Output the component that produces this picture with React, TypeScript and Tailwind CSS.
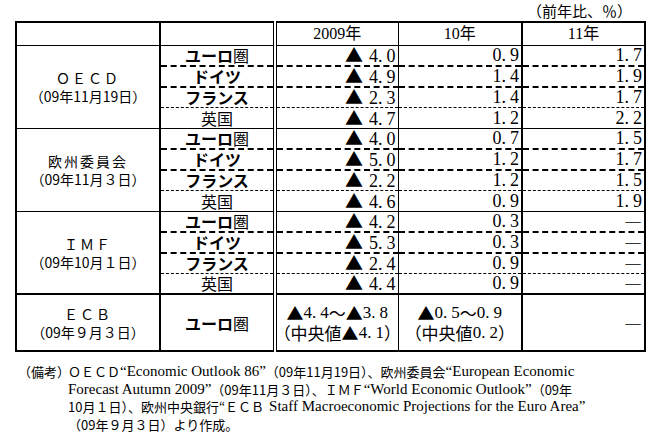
import React from 'react'

type Row = { name: string; v: string[] }
type Group = { label: string; date: string; rows: Row[] }

const groups: Group[] = [
  {
    label: 'ＯＥＣＤ',
    date: '（09年11月19日）',
    rows: [
      { name: 'ユーロ圏', v: ['▲4.0', '0.9', '1.7'] },
      { name: 'ドイツ', v: ['▲4.9', '1.4', '1.9'] },
      { name: 'フランス', v: ['▲2.3', '1.4', '1.7'] },
      { name: '英国', v: ['▲4.7', '1.2', '2.2'] },
    ],
  },
  {
    label: '欧州委員会',
    date: '（09年11月３日）',
    rows: [
      { name: 'ユーロ圏', v: ['▲4.0', '0.7', '1.5'] },
      { name: 'ドイツ', v: ['▲5.0', '1.2', '1.7'] },
      { name: 'フランス', v: ['▲2.2', '1.2', '1.5'] },
      { name: '英国', v: ['▲4.6', '0.9', '1.9'] },
    ],
  },
  {
    label: 'ＩＭＦ',
    date: '（09年10月１日）',
    rows: [
      { name: 'ユーロ圏', v: ['▲4.2', '0.3', '―'] },
      { name: 'ドイツ', v: ['▲5.3', '0.3', '―'] },
      { name: 'フランス', v: ['▲2.4', '0.9', '―'] },
      { name: '英国', v: ['▲4.4', '0.9', '―'] },
    ],
  },
]

const rowH = ['h-[19px]', 'h-[19px]', 'h-[19px]', 'h-[20px]']

// bottom border of each row inside a group
const rowBottom = [
  'border-b-2 [border-bottom-style:dashed]',
  'border-b-2 [border-bottom-style:dashed]',
  'border-b [border-bottom-style:dashed]',
  'border-b',
]

const gothic = "font-['Noto_Sans_CJK_JP',sans-serif]"
const serif = "font-['Liberation_Serif','Noto_Sans_CJK_JP',serif]"

const colRight = [
  'border-r-2',
  'border-r-4 [border-right-style:double]',
  'border-r',
  'border-r-2',
  '',
]

function Name ({ name }: { name: string }) {
  if (name === 'ユーロ圏') {
    return (
      <span>
        <span className="font-bold">ユーロ</span>圏
      </span>
    )
  }
  if (name === '英国') return <span>{name}</span>
  return <span className="font-bold">{name}</span>
}

// number like "4. 0" — decimal gets a small gap after the point
function Dec ({ v }: { v: string }) {
  const [a, b] = v.split('.')
  return <>{a}.<span className="ml-[4px]">{b}</span></>
}

function Num ({ v }: { v: string }) {
  if (v === '―') return <span className={gothic}>―</span>
  const neg = v.startsWith('▲')
  return (
    <span className="whitespace-nowrap">
      {neg && <span className={`${gothic} mr-[6px]`}>▲</span>}
      <Dec v={v.replace('▲', '')} />
    </span>
  )
}

function Label ({ label, date }: { label: string; date: string }) {
  return (
    <div className={`${gothic} text-[14px] leading-[18px] text-center`}>
      <div className="tracking-[2px]">{label}</div>
      <div>{date}</div>
    </div>
  )
}

export default function App () {
  return (
    <div className="w-[665px] h-[447px] bg-white text-black overflow-hidden">
      <div className={`${gothic} w-[644px] pr-[12px] pt-[2px] h-[21px] text-right text-[15px] leading-[18px]`}>
        （前年比、％）
      </div>

      <table className="ml-[15px] w-[629px] table-fixed border-2 border-black">
        <colgroup>
          <col className="w-[144px]" />
          <col className="w-[115px]" />
          <col className="w-[123px]" />
          <col className="w-[124px]" />
          <col className="w-[123px]" />
        </colgroup>
        <tbody>
          <tr>
            <th className={`${colRight[0]} border-b border-black`}>
              <div className="h-[22px]" />
            </th>
            <th className={`${colRight[1]} border-b border-black`} />
            {['2009年', '10年', '11年'].map((h, i) => (
              <th
                key={h}
                className={`${colRight[i + 2]} border-b border-black font-normal p-0 ${serif}`}
              >
                <div className="h-[22px] flex items-center justify-center text-[16px] leading-[18px]">{h}</div>
              </th>
            ))}
          </tr>

          {groups.map((g, gi) =>
            g.rows.map((r, ri) => {
              const last = ri === 3 && gi === 2
              const bottom = last ? 'border-b-2' : rowBottom[ri]
              const h = last ? 'h-[19px]' : rowH[ri]
              return (
                <tr key={`${gi}-${ri}`}>
                  {ri === 0 && (
                    <td
                      rowSpan={4}
                      className={`${colRight[0]} ${gi === 2 ? 'border-b-2' : 'border-b'} border-black p-0`}
                    >
                      <Label label={g.label} date={g.date} />
                    </td>
                  )}
                  <td className={`${colRight[1]} ${bottom} border-black p-0 ${gothic}`}>
                    <div className={`${h} flex items-center justify-center text-[16px] leading-[17px]`}>
                      <Name name={r.name} />
                    </div>
                  </td>
                  {r.v.map((v, vi) => (
                    <td
                      key={vi}
                      className={`${colRight[vi + 2]} ${bottom} border-black p-0 ${serif}`}
                    >
                      <div className={`${h} flex items-center justify-end pr-[2px] text-[18px] leading-[17px]`}>
                        <Num v={v} />
                      </div>
                    </td>
                  ))}
                </tr>
              )
            })
          )}

          <tr>
            <td className={`${colRight[0]} border-black p-0`}>
              <div className="h-[55px] flex items-center justify-center">
                <Label label="ＥＣＢ" date="（09年９月３日）" />
              </div>
            </td>
            <td className={`${colRight[1]} border-black p-0 ${gothic}`}>
              <div className="h-[55px] flex items-center justify-center text-[16px] leading-[18px]">
                <Name name="ユーロ圏" />
              </div>
            </td>
            <td className={`${colRight[2]} border-black p-0 ${serif}`}>
              <div className="h-[55px] flex flex-col items-center justify-center text-[17px] leading-[18px] whitespace-nowrap">
                <div className="h-[20px] flex items-center">
                  <span className={gothic}>▲</span><Dec v="4.4" /><span className={gothic}>～▲</span><Dec v="3.8" />
                </div>
                <div className="h-[20px] flex items-center">
                  <span className={gothic}>（中央値▲</span><Dec v="4.1" /><span className={gothic}>）</span>
                </div>
              </div>
            </td>
            <td className={`${colRight[3]} border-black p-0 ${serif}`}>
              <div className="h-[55px] flex flex-col items-center justify-center text-[17px] leading-[18px] whitespace-nowrap">
                <div className="h-[20px] flex items-center">
                  <span className={gothic}>▲</span><Dec v="0.5" /><span className={gothic}>～</span><Dec v="0.9" />
                </div>
                <div className="h-[20px] flex items-center">
                  <span className={gothic}>（中央値</span><Dec v="0.2" /><span className={gothic}>）</span>
                </div>
              </div>
            </td>
            <td className="p-0">
              <div className="h-[55px] flex items-center justify-end pr-[2px] text-[18px] leading-[18px]">
                <span className={gothic}>―</span>
              </div>
            </td>
          </tr>
        </tbody>
      </table>

      <div className={`mt-[11px] flex pl-[18px] text-[15px] leading-[17.5px] ${serif}`}>
        <div className={`${gothic} text-[13px] w-[50px] shrink-0`}>（備考）</div>
        <div className="whitespace-nowrap">
          <div className="h-[17.5px] flex items-center">
            <span className={`${gothic} text-[13px]`}>ＯＥＣＤ</span>
            <span>“Economic Outlook 86”</span>
            <span className={`${gothic} text-[13px]`}>（09年11月19日）、欧州委員会</span>
            <span>“European Economic</span>
          </div>
          <div className="h-[17.5px] flex items-center">
            <span>Forecast Autumn 2009”</span>
            <span className={`${gothic} text-[13px]`}>（09年11月３日）、ＩＭＦ</span>
            <span>“World Economic Outlook”</span>
            <span className={`${gothic} text-[13px]`}>（09年</span>
          </div>
          <div className="h-[17.5px] flex items-center">
            <span className={`${gothic} text-[13px]`}>10月１日）、欧州中央銀行“ＥＣＢ</span>
            <span className="ml-[5px]">Staff Macroeconomic Projections for the Euro Area”</span>
          </div>
          <div className="h-[17.5px] flex items-center">
            <span className={`${gothic} text-[13px]`}>（09年９月３日）より作成。</span>
          </div>
        </div>
      </div>
    </div>
  )
}
